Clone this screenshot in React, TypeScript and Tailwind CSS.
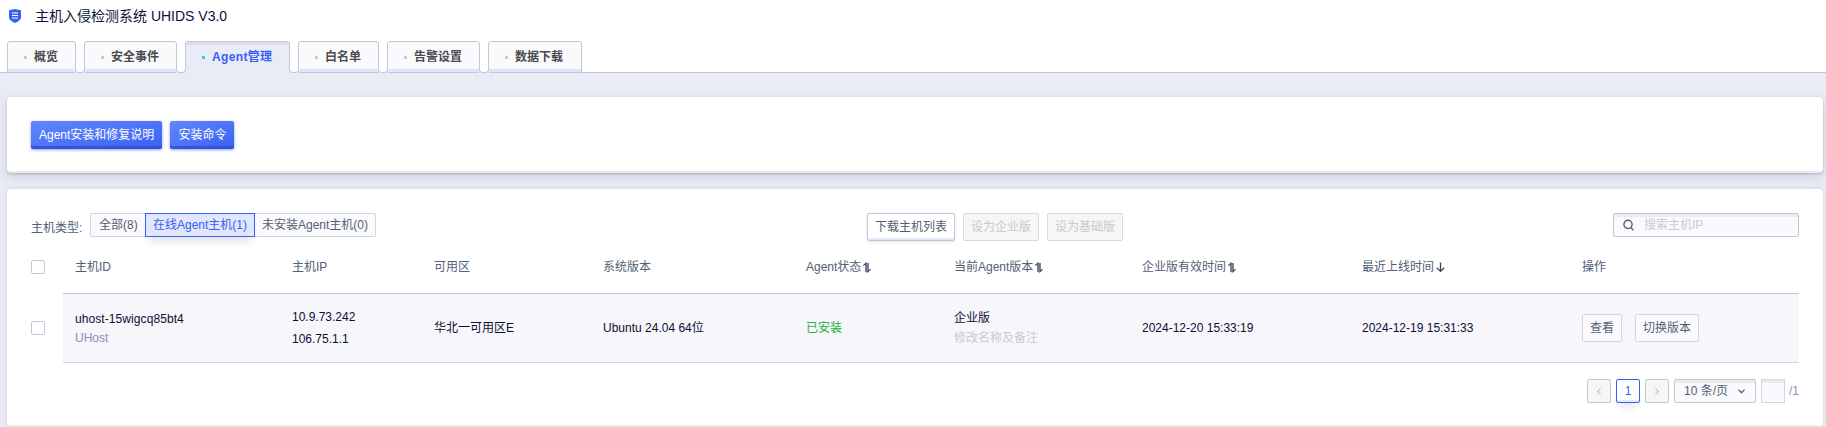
import React from "react";

const tabs = [
  { label: "概览", w: "w-[69px]" },
  { label: "安全事件", w: "w-[93px]" },
  { label: "Agent管理", w: "w-[105px]", active: true },
  { label: "白名单", w: "w-[81px]" },
  { label: "告警设置", w: "w-[93px]" },
  { label: "数据下载", w: "w-[94px]" },
];

function Notch() {
  return (
    <div className="relative z-10 -mx-px h-[4px] w-[10px] shrink-0 bg-[#e9ecf5]">
      <div className="h-full rounded-b-[4px] border-x border-b border-[#c1c7d9] bg-white" />
    </div>
  );
}

function TabBar() {
  return (
    <div className="flex h-[32px] items-end">
      <div className="h-px w-[7px] bg-[#c1c7d9]" />
      {tabs.map((t, i) => (
        <React.Fragment key={t.label}>
          {i > 0 && <Notch />}
          <div
            className={
              "flex h-[32px] shrink-0 flex-col rounded-t-[3px] border-x border-t border-[#c1c7d9] font-bold " +
              t.w +
              (t.active ? " bg-[#e9ecf5] text-[#3860f4]" : " border-b bg-[#fafafc] text-[#4a4a4f]")
            }
          >
            <div className={t.active ? "h-[3px] bg-[#dcdff0]" : "h-[3px]"} />
            <div className="flex flex-1 items-center pl-[16px]">
              <span className={"mr-[7px] size-[3px] " + (t.active ? "bg-[#39ccec]" : "bg-[#c9c9d1]")} />
              <span className={"leading-[18px]" + (t.active ? " tracking-[0.35px]" : "")}>{t.label}</span>
            </div>
            <div className={t.active ? "h-[4px]" : "h-[3px] bg-[#e1e6fd]"} />
          </div>
        </React.Fragment>
      ))}
      <div className="h-px flex-1 bg-[#c1c7d9]" />
    </div>
  );
}

function SortIcon() {
  return (
    <svg width="8" height="11" viewBox="0 0 8 11" className="ml-[2px] mt-[4px]">
      <rect x="3" y="1" width="2" height="9.5" fill="#a3a9b8" />
      <path d="M0.4 3.6 L2.9 1.1 V10" fill="none" stroke="#39425c" strokeWidth="1.1" />
      <path d="M5.1 1 V9.6 L7.6 7.1" fill="none" stroke="#39425c" strokeWidth="1.1" />
    </svg>
  );
}

function DownIcon() {
  return (
    <svg width="9" height="11" viewBox="0 0 9 11" className="ml-[2px] mt-[4px]">
      <path d="M4.5 0.5 V9.2 M0.8 5.8 L4.5 9.4 L8.2 5.8" fill="none" stroke="#39425c" strokeWidth="1.3" />
    </svg>
  );
}

function Checkbox() {
  return <span className="block size-[14px] rounded-[2px] border border-[#c1c7d9] bg-white" />;
}

const cols = "grid grid-cols-[217px_142px_169px_203px_148px_188px_220px_220px_1fr] pl-[12px]";

function PrimaryButton({ children }: { children: string }) {
  return (
    <button className="h-[28px] rounded-[2px] bg-linear-to-br from-[#6486fb] to-[#3860f4] px-[8px] leading-[28px] text-white shadow-[inset_0_-3px_0_rgba(44,76,196,0.7),0_1px_3px_rgba(56,96,244,0.6)]">
      {children}
    </button>
  );
}

export default function App() {
  return (
    <div className="h-[427px] w-[1826px] overflow-hidden bg-[#e9ecf5] font-['Liberation_Sans','Noto_Sans_CJK_SC',sans-serif] text-[12px] text-[#526075]">
      <header className="bg-white">
        <div className="flex h-[41px] items-center pb-[10px] pl-[9px]">
          <svg width="12" height="14" viewBox="0 0 12 14" className="mt-px">
            <path d="M6 0 L12 1.3 V8.2 Q12 11.2 6 14 Q0 11.2 0 8.2 V1.3 Z" fill="#3860f4" />
            <path d="M3 4 H9 M3 6.5 H9 M3 9 H9" stroke="#fff" strokeWidth="1.1" />
          </svg>
          <h1 className="ml-[14px] text-[14px] leading-[20px] text-[#0b1033]">主机入侵检测系统 UHIDS V3.0</h1>
        </div>
        <TabBar />
      </header>

      <main className="flex flex-col gap-[16px] pl-[7px] pr-[3px] pt-[24px]">
        <section className="flex h-[76px] items-start gap-[8px] rounded-[4px] border-b-2 border-[#ebebeb] bg-white px-[24px] pt-[24px] shadow-[0_1px_2px_rgba(60,70,90,0.25),0_4px_12px_rgba(60,70,90,0.16)]">
          <PrimaryButton>Agent安装和修复说明</PrimaryButton>
          <PrimaryButton>安装命令</PrimaryButton>
        </section>

        <section className="h-[238px] rounded-[4px] border-b-2 border-[#ebebeb] bg-white pl-[24px] pr-[24px] pt-[24px] shadow-[0_0_4px_rgba(60,70,90,0.15)]">
          <div className="flex h-[28px] items-start">
            <span className="mt-[6px] w-[59px] leading-[18px]">主机类型:</span>
            <div className="flex h-[24px] leading-[22px]">
              <div className="w-[56px] rounded-l-[2px] border border-r-0 border-[#d0d5ea] bg-[#fafafc] pl-[8px]">全部(8)</div>
              <div className="relative z-10 -ml-px w-[110px] border border-[#3860f4] bg-[#e1e6fd] pl-[7px] text-[#3860f4] shadow-[0_8px_10px_-4px_rgba(0,0,0,0.12)]">在线Agent主机(1)</div>
              <div className="w-[121px] rounded-r-[2px] border border-l-0 border-[#d0d5ea] bg-[#fafafc] pl-[7px]">未安装Agent主机(0)</div>
            </div>
            <div className="ml-[491px] flex gap-[8px] leading-[26px]">
              <button className="h-[28px] w-[88px] rounded-[2px] border border-[#c1c7d9] bg-white shadow-[inset_0_-2px_0_#e1e6fd,0_1px_3px_rgba(60,70,90,0.15)]">下载主机列表</button>
              <button className="h-[28px] w-[76px] rounded-[2px] border border-[#d8d8d8] bg-[#f6f6f6] text-[#c9c9cc]">设为企业版</button>
              <button className="h-[28px] w-[76px] rounded-[2px] border border-[#d8d8d8] bg-[#f6f6f6] text-[#c9c9cc]">设为基础版</button>
            </div>
            <div className="ml-auto flex h-[24px] w-[186px] items-center rounded-[2px] border border-[#c1c7d9] bg-[#fafafc] pl-[9px] text-[#c9cbd6] shadow-[inset_0_3px_0_#ebebef]">
              <svg width="11" height="12" viewBox="0 0 11 12" className="mr-[10px]" fill="none" stroke="#526075" strokeWidth="1.4">
                <circle cx="5" cy="5.4" r="4.1" />
                <path d="M7.6 8.2 L10.4 11.2" />
              </svg>
              <span>搜索主机IP</span>
            </div>
          </div>

          <div className="flex h-[53px]">
            <div className="w-[32px] pt-[19px]"><Checkbox /></div>
            <div className={cols + " flex-1 border-b border-[#c1c7d9] pt-[17px] leading-[18px]"}>
              <div>主机ID</div>
              <div>主机IP</div>
              <div>可用区</div>
              <div>系统版本</div>
              <div className="flex">Agent状态<SortIcon /></div>
              <div className="flex">当前Agent版本<SortIcon /></div>
              <div className="flex">企业版有效时间<SortIcon /></div>
              <div className="flex">最近上线时间<DownIcon /></div>
              <div>操作</div>
            </div>
          </div>

          <div className="flex h-[69px]">
            <div className="w-[32px] pt-[27px]"><Checkbox /></div>
            <div className={cols + " flex-1 items-center border-b border-[#d0d5ea] bg-[#f6f6fb] leading-[18px] text-[#0b1033]"}>
              <div className="pt-px leading-[19px]">
                <div className="tracking-[0.08px]">uhost-15wigcq85bt4</div>
                <div className="text-[#8690b0]">UHost</div>
              </div>
              <div className="leading-[22px]">
                <div>10.9.73.242</div>
                <div>106.75.1.1</div>
              </div>
              <div>华北一可用区E</div>
              <div>Ubuntu 24.04 64位</div>
              <div className="text-[#1bb33a]">已安装</div>
              <div className="leading-[20px]">
                <div>企业版</div>
                <div className="text-[#c9cbd6]">修改名称及备注</div>
              </div>
              <div>2024-12-20 15:33:19</div>
              <div>2024-12-19 15:31:33</div>
              <div className="flex gap-[13px] leading-[26px] text-[#526075]">
                <button className="h-[28px] w-[40px] rounded-[2px] border border-[#d0d5ea] bg-[#fafafc]">查看</button>
                <button className="h-[28px] w-[64px] rounded-[2px] border border-[#d0d5ea] bg-[#fafafc]">切换版本</button>
              </div>
            </div>
          </div>

          <div className="flex items-start justify-end pt-[16px] leading-[22px]">
            <div className="grid h-[24px] w-[24px] place-items-center rounded-[2px] border border-[#c9c9c9] bg-[#f6f6f6]">
              <svg width="4" height="7" viewBox="0 0 4 7" fill="none" stroke="#c3c3c6" strokeWidth="1.2"><path d="M3.6 0.4 L0.6 3.5 L3.6 6.6" /></svg>
            </div>
            <div className="ml-[5px] h-[24px] w-[24px] rounded-[2px] border border-[#3860f4] bg-white text-center text-[#3860f4] shadow-[inset_0_-2px_0_#e1e6fd,0_8px_10px_-4px_rgba(0,0,0,0.12)]">1</div>
            <div className="ml-[5px] grid h-[24px] w-[24px] place-items-center rounded-[2px] border border-[#c9c9c9] bg-[#f6f6f6]">
              <svg width="4" height="7" viewBox="0 0 4 7" fill="none" stroke="#c3c3c6" strokeWidth="1.2"><path d="M0.4 0.4 L3.4 3.5 L0.4 6.6" /></svg>
            </div>
            <div className="ml-[5px] flex h-[24px] w-[82px] items-center rounded-[2px] border border-[#c1c7d9] bg-[#fafafc] pl-[9px] shadow-[inset_0_3px_0_#ebebef]">
              <span>10 条/页</span>
              <svg width="7" height="5" viewBox="0 0 7 5" className="ml-[10px] mt-px" fill="none" stroke="#526075" strokeWidth="1.3"><path d="M0.5 0.6 L3.5 3.7 L6.5 0.6" /></svg>
            </div>
            <div className="ml-[5px] h-[24px] w-[24px] border border-[#d0d5ea] bg-[#fafafc] shadow-[inset_0_3px_0_#ebebef]" />
            <span className="ml-[4px] w-[10px] pt-px text-[#8690b0]">/1</span>
          </div>
        </section>
      </main>
    </div>
  );
}
